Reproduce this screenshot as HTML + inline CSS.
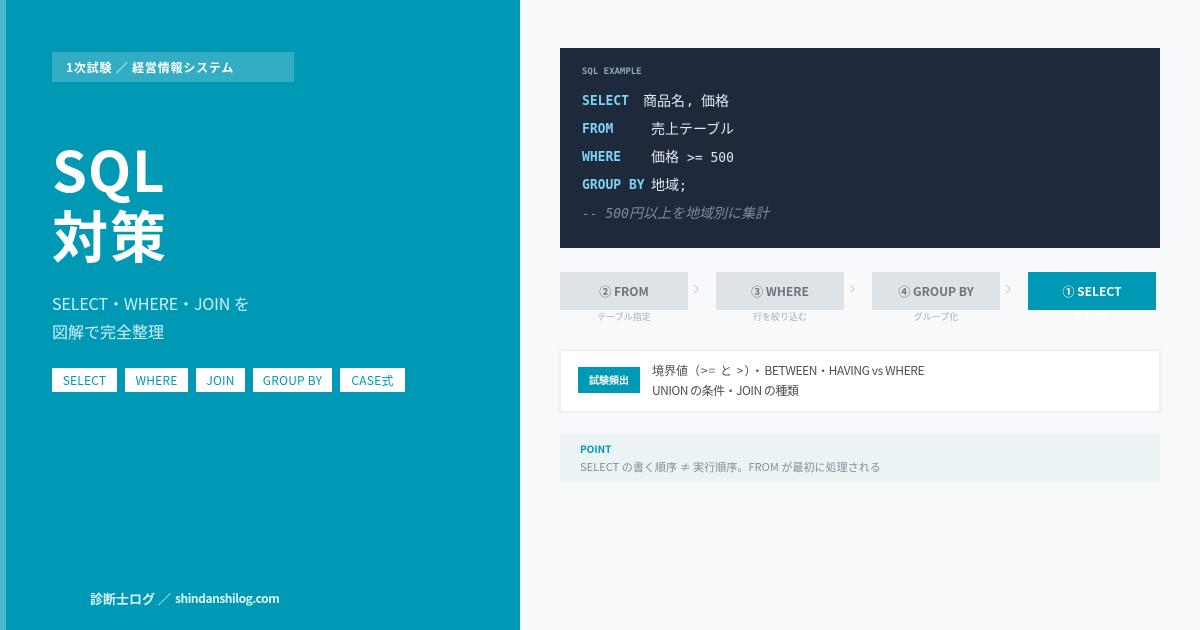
<!DOCTYPE html>
<html lang="ja">
<head>
<meta charset="utf-8">
<style>
html,body{margin:0;padding:0;}
body{width:1200px;height:630px;overflow:hidden;position:relative;background:#f8f9fb;font-family:"Noto Sans CJK JP","Liberation Sans",sans-serif;}
.a{position:absolute;white-space:nowrap;}
.c{text-align:center;}
.mono{font-family:"DejaVu Sans Mono","Noto Sans CJK JP",monospace;font-size:13px;line-height:28px;color:#e2e8f0;}
.j{font-family:"Noto Sans CJK JP",sans-serif;font-size:14px;line-height:24px;color:#e2e8f0;}
.k{color:#7dd3f5;font-weight:bold;}
.tag{position:absolute;top:368px;height:24px;line-height:25px;background:#fff;color:#0099b5;font-size:12px;letter-spacing:.2px;text-align:center;}
.step{position:absolute;top:272px;width:128px;height:38px;line-height:40px;background:#dee3e7;color:#6c757d;font-size:12px;font-weight:bold;text-align:center;}
.sub{position:absolute;top:310px;width:128px;font-size:9px;line-height:13px;color:#a3adb8;text-align:center;}
svg{position:absolute;}
</style>
</head>
<body>
<div class="a" style="left:0;top:0;width:520px;height:630px;background:#0099b5;"></div>
<div class="a" style="left:0;top:0;width:6px;height:630px;background:#4db8cc;"></div>
<div class="a" style="left:52px;top:52px;width:242px;height:30px;background:#33adc4;"></div>
<div class="a" style="left:66px;top:53px;line-height:30px;font-size:12px;letter-spacing:.8px;font-weight:bold;color:#fff;">1次試験 ／ 経営情報システム</div>
<div class="a" style="left:52px;top:137px;font-size:56px;line-height:64px;font-weight:bold;letter-spacing:1px;color:#fff;">SQL</div>
<div class="a" style="left:52px;top:202px;font-size:56px;line-height:66px;font-weight:bold;letter-spacing:2px;color:#fff;">対策</div>
<div class="a" style="left:52px;top:289px;font-size:16px;line-height:28px;letter-spacing:-.1px;color:#cdf0f6;">SELECT・WHERE・JOIN を<br><span style="letter-spacing:0">図解で完全整理</span></div>
<div class="tag" style="left:52px;width:65px;">SELECT</div>
<div class="tag" style="left:125px;width:63px;">WHERE</div>
<div class="tag" style="left:196px;width:49px;">JOIN</div>
<div class="tag" style="left:253px;width:79px;">GROUP BY</div>
<div class="tag" style="left:340px;width:65px;">CASE式</div>
<div class="a" style="left:90px;top:590px;font-size:13px;line-height:18px;font-weight:bold;color:#d9f3f7;">診断士ログ ／</div>
<div class="a" style="left:175px;top:590px;font-size:12px;line-height:18px;font-weight:bold;letter-spacing:-.45px;color:#d9f3f7;">shindanshilog.com</div>

<div class="a" style="left:560px;top:48px;width:600px;height:200px;background:#1e293b;"></div>
<div class="a" style="left:582px;top:65px;font-family:'DejaVu Sans Mono',monospace;font-size:9px;line-height:14px;font-weight:bold;color:#94a3b8;">SQL EXAMPLE</div>

<div class="a mono k" style="left:582px;top:88px;">SELECT</div>
<div class="a j" style="left:643px;top:89px;">商品名</div>
<div class="a mono" style="left:686px;top:88px;">,</div>
<div class="a j" style="left:701px;top:89px;">価格</div>
<div class="a mono k" style="left:582px;top:116px;">FROM</div>
<div class="a j" style="left:651px;top:117px;">売上テーブル</div>
<div class="a mono k" style="left:582px;top:144px;">WHERE</div>
<div class="a j" style="left:651px;top:145px;">価格</div>
<div class="a mono" style="left:687px;top:145px;">&gt;= 500</div>
<div class="a mono k" style="left:582px;top:172px;">GROUP BY</div>
<div class="a j" style="left:651px;top:173px;">地域</div>
<div class="a mono" style="left:679px;top:173px;">;</div>
<div class="a mono" style="left:582px;top:199px;color:#7e8a9a;font-style:italic;">-- 500<span style="font-family:'Noto Sans CJK JP',sans-serif;font-size:14px;">円以上を地域別に集計</span></div>

<div class="step" style="left:560px;">② FROM</div>
<div class="sub" style="left:560px;">テーブル指定</div>
<svg style="left:692px;top:284px;" width="8" height="10" viewBox="0 0 8 10"><polyline points="2.5,1 6,5 2.5,9" fill="none" stroke="#c4cdd5" stroke-width="1.1"/></svg>
<div class="step" style="left:716px;">③ WHERE</div>
<div class="sub" style="left:716px;">行を絞り込む</div>
<svg style="left:848px;top:284px;" width="8" height="10" viewBox="0 0 8 10"><polyline points="2.5,1 6,5 2.5,9" fill="none" stroke="#c4cdd5" stroke-width="1.1"/></svg>
<div class="step" style="left:872px;">④ GROUP BY</div>
<div class="sub" style="left:872px;">グループ化</div>
<svg style="left:1004px;top:284px;" width="8" height="10" viewBox="0 0 8 10"><polyline points="2.5,1 6,5 2.5,9" fill="none" stroke="#c4cdd5" stroke-width="1.1"/></svg>
<div class="step" style="left:1028px;background:#0099b5;color:#fff;">① SELECT</div>
<div class="sub" style="left:1028px;color:#fff;">列を出力</div>

<div class="a" style="left:559px;top:349px;width:598px;height:60px;background:#fff;border:2px solid #eceff3;"></div>
<div class="a c" style="left:578px;top:367px;width:62px;height:26px;line-height:26px;background:#0099b5;color:#fff;font-size:10px;font-weight:bold;">試験頻出</div>
<div class="a" style="left:652px;top:361px;font-size:12px;line-height:20px;color:#495057;">境界値<span style="letter-spacing:1px">（&gt;= と &gt;）・</span><span style="letter-spacing:-.4px">BETWEEN・HAVING vs WHERE</span><br><span style="letter-spacing:-.5px">UNION の条件・JOIN の種類</span></div>

<div class="a" style="left:560px;top:434px;width:600px;height:48px;background:#ebf3f5;"></div>
<div class="a" style="left:580px;top:442px;font-size:10px;line-height:14px;font-weight:bold;color:#0099b5;">POINT</div>
<div class="a" style="left:580px;top:459px;font-size:11px;line-height:16px;letter-spacing:.06px;color:#868e96;">SELECT の書く順序 ≠ 実行順序。FROM が最初に処理される</div>
</body>
</html>
